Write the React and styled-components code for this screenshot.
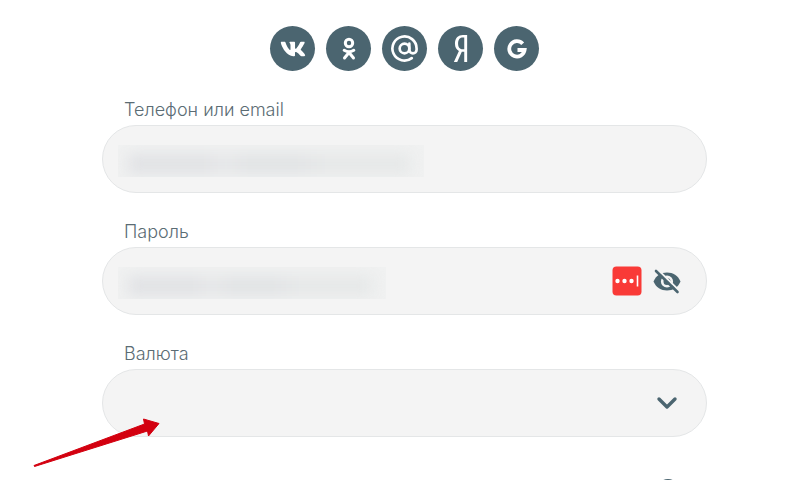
import React, { useState } from 'react';
import styled, { createGlobalStyle } from 'styled-components';
import { AtSign } from 'lucide-react';
import { FaVk, FaYandex } from 'react-icons/fa';

const GlobalStyle = createGlobalStyle`
    * {
        box-sizing: border-box;
    }

    body {
        margin: 0;
        background: #fff;
        color: #4b6570;
        font-family: Inter, "Open Sans", sans-serif;
    }
`;

const Page = styled.main`
    position: relative;
    height: 100vh;
    overflow: hidden;
    padding: 26px 93px 0 102px;
`;

const Form = styled.form`
    display: flex;
    flex-direction: column;
    gap: 27px;
`;

const Socials = styled.nav`
    display: flex;
    justify-content: center;
    gap: 11px;
`;

const SocialLink = styled.a`
    display: flex;
    align-items: center;
    justify-content: center;
    width: 45px;
    height: 45px;
    border-radius: 50%;
    background: #4b6570;
    color: #fff;
`;

const Field = styled.div`
    display: flex;
    flex-direction: column;
    gap: 4px;
`;

const Label = styled.label`
    align-self: flex-start;
    padding: 1px 0 0 22px;
    color: #5b6c74;
    font-size: 18px;
    font-weight: 300;
    line-height: 22px;
`;

const Pill = styled.div`
    position: relative;
    display: flex;
    align-items: center;
    gap: 10px;
    height: 68px;
    padding: 0 24px;
    border: 1px solid #e4e6e7;
    border-radius: 34px;
    background: #f4f4f4;
`;

const Input = styled.input`
    flex: 1;
    min-width: 0;
    height: 100%;
    border: 0;
    outline: 0;
    background: transparent;
    color: inherit;
    font: inherit;
    font-size: 18px;
`;

const Select = styled.select`
    flex: 1;
    height: 100%;
    appearance: none;
    border: 0;
    outline: 0;
    background: transparent;
    color: inherit;
    font: inherit;
    font-size: 18px;
`;

const IconButton = styled.button`
    display: flex;
    align-items: center;
    justify-content: center;
    width: 30px;
    height: 30px;
    padding: 0;
    border: 0;
    background: transparent;
    color: #4b6570;
    cursor: pointer;
`;

// Hides the entered value
const Veil = styled.span`
    position: absolute;
    top: 19px;
    left: 15px;
    width: ${(props) => props.$width}px;
    height: 32px;
    overflow: hidden;
    background: #f0f1f1;
    pointer-events: none;

    &::before {
        content: '';
        position: absolute;
        inset: 9px 14px 3px 10px;
        background: linear-gradient(90deg, #e1e2e5 0 28%, #e7e8e9 34%, #e1e3e5 42% 60%, #e6e8e8 70% 100%);
        filter: blur(7px);
    }
`;

const SelectIcon = styled.svg`
    flex: none;
    margin-right: 4px;
    pointer-events: none;
`;

const HelpRow = styled.div`
    display: flex;
    justify-content: flex-end;
    padding: 15px 28px 0 0;
`;

const HelpButton = styled.button`
    width: 22px;
    height: 22px;
    padding: 0;
    border: 2px solid #4b6570;
    border-radius: 50%;
    background: #fff;
`;

const Pointer = styled.svg`
    position: absolute;
    left: 32px;
    top: 414px;
    pointer-events: none;
`;

const OkIcon = () => (
    <svg width="16" height="24" viewBox="0 0 16 24" fill="none" stroke="currentColor" strokeWidth="3" strokeLinecap="round">
        <circle cx="8" cy="6" r="3.7" />
        <path d="M3.2 13.3c3 1.9 6.600 1.9 9.600 0M8 15.500L3.500 21M8 15.500L12.500 21" />
    </svg>
);

const GoogleIcon = () => (
    <svg width="22" height="22" viewBox="0 0 22 22" fill="none" stroke="currentColor" strokeWidth="3.8">
        <path d="M16.700 5.700A7.700 7.700 0 1 0 18.600 12H11.500" />
    </svg>
);

const EyeOffIcon = () => (
    <svg width="30" height="28" viewBox="0 0 30 28">
        <path d="M1.500 14.500C4 8.500 9 5.500 15 5.500s11 3 13.500 9c-2.500 6-7.500 9-13.500 9s-11-3-13.500-9z" fill="currentColor" />
        <circle cx="15" cy="14.500" r="4.800" fill="#4b6570" stroke="#f4f4f4" strokeWidth="2.600" />
        <path d="M15 9v4.500" stroke="#f4f4f4" strokeWidth="2.600" />
        <path d="M5.500 2.500l22 21.500" stroke="#f4f4f4" strokeWidth="2.200" />
        <path d="M4 4l21.500 21" stroke="currentColor" strokeWidth="2.600" strokeLinecap="round" />
    </svg>
);

const PasswordManagerIcon = () => (
    <svg width="30" height="30" viewBox="0 0 30 30">
        <rect x="0.5" y="0.5" width="29" height="29" rx="4" fill="#f93a37" />
        <circle cx="5.5" cy="15" r="2.2" fill="#fff" />
        <circle cx="12.5" cy="15" r="2.2" fill="#fff" />
        <circle cx="19.5" cy="15" r="2.2" fill="#fff" />
        <path d="M25.5 9.5v11" stroke="#fff" strokeWidth="1.6" />
    </svg>
);

const socials = [
    { name: 'VK', icon: <FaVk size={26} /> },
    { name: 'Одноклассники', icon: <OkIcon /> },
    { name: 'Mail.ru', icon: <AtSign size={29} strokeWidth={2.2} /> },
    { name: 'Яндекс', icon: <FaYandex size={27} /> },
    { name: 'Google', icon: <GoogleIcon /> },
];

const App = () => {
    const [visible, setVisible] = useState(false);

    return (
        <Page>
            <GlobalStyle />
            <Form>
                <Socials>
                    {socials.map((social) => (
                        <SocialLink key={social.name} href="#" aria-label={social.name}>
                            {social.icon}
                        </SocialLink>
                    ))}
                </Socials>

                <Field>
                    <Label htmlFor="login">Телефон или email</Label>
                    <Pill>
                        <Input id="login" type="text" />
                        <Veil $width={306} />
                    </Pill>
                </Field>

                <Field>
                    <Label htmlFor="password">Пароль</Label>
                    <Pill>
                        <Input id="password" type={visible ? 'text' : 'password'} />
                        <Veil $width={268} />
                        <IconButton type="button" aria-label="Менеджер паролей">
                            <PasswordManagerIcon />
                        </IconButton>
                        <IconButton
                            type="button"
                            aria-label="Показать пароль"
                            onClick={() => setVisible(!visible)}
                        >
                            <EyeOffIcon />
                        </IconButton>
                    </Pill>
                </Field>

                <Field>
                    <Label htmlFor="currency">Валюта</Label>
                    <Pill>
                        <Select id="currency" defaultValue="">
                            <option value="" />
                        </Select>
                        <SelectIcon width="22" height="14" viewBox="0 0 22 14" fill="none">
                            <path
                                d="M3 3l8 8 8-8"
                                stroke="#4b6570"
                                strokeWidth="3.4"
                                strokeLinecap="round"
                                strokeLinejoin="round"
                            />
                        </SelectIcon>
                    </Pill>
                </Field>

                <HelpRow>
                    <HelpButton type="button" aria-label="Помощь" />
                </HelpRow>
            </Form>

            <Pointer width="130" height="56" viewBox="0 0 130 56">
                <path
                    d="M2 51.5L112.5 10 111.5 5 127 9.5 116.5 22 115.5 17 2.5 52.5z"
                    fill="#d3000f"
                    stroke="#d3000f"
                    strokeWidth="1"
                    strokeLinejoin="round"
                />
            </Pointer>
        </Page>
    );
};

export default App;
